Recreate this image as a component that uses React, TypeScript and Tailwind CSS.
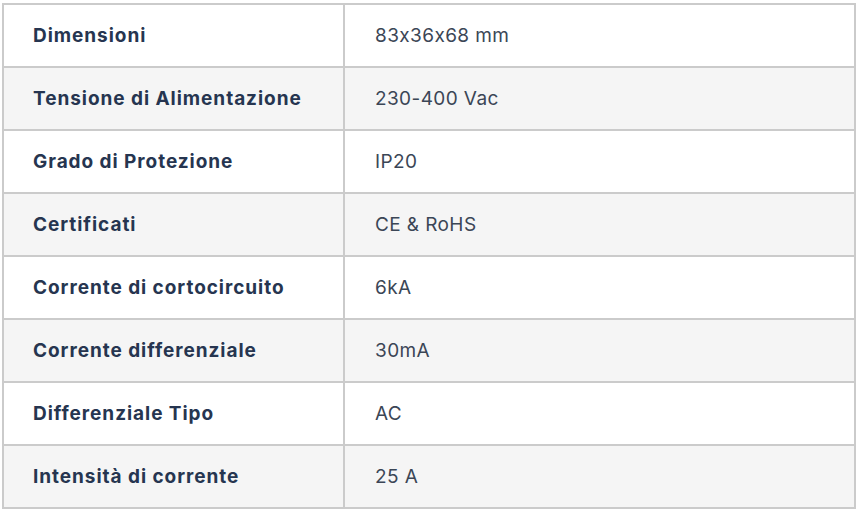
const specs: [string, string][] = [
  ["Dimensioni", "83x36x68 mm"],
  ["Tensione di Alimentazione", "230-400 Vac"],
  ["Grado di Protezione", "IP20"],
  ["Certificati", "CE & RoHS"],
  ["Corrente di cortocircuito", "6kA"],
  ["Corrente differenziale", "30mA"],
  ["Differenziale Tipo", "AC"],
  ["Intensità di corrente", "25 A"],
];

export default function App() {
  return (
    <div className="w-[859px] h-[513px] bg-white pt-[3px] pl-[2px] font-['Inter',sans-serif] [font-variant-ligatures:no-contextual]">
      <table className="w-[854px] border-collapse border-2 border-[#cbcbcb] table-fixed">
        <colgroup>
          <col className="w-[341px]" />
          <col />
        </colgroup>
        <tbody>
          {specs.map(([label, value], i) => (
            <tr key={label} className={i % 2 === 1 ? "bg-[#f5f5f5]" : "bg-white"}>
              <th className="h-[63px] border-2 border-[#cbcbcb] pl-[29px] pt-[2px] text-left text-[19px] font-bold tracking-[0.95px] text-[#263550]">
                {label}
              </th>
              <td className="h-[63px] border-2 border-[#cbcbcb] pl-[30px] pt-[2px] text-[19px] tracking-[0.4px] text-[#3b4656]">
                {value}
              </td>
            </tr>
          ))}
        </tbody>
      </table>
    </div>
  );
}
